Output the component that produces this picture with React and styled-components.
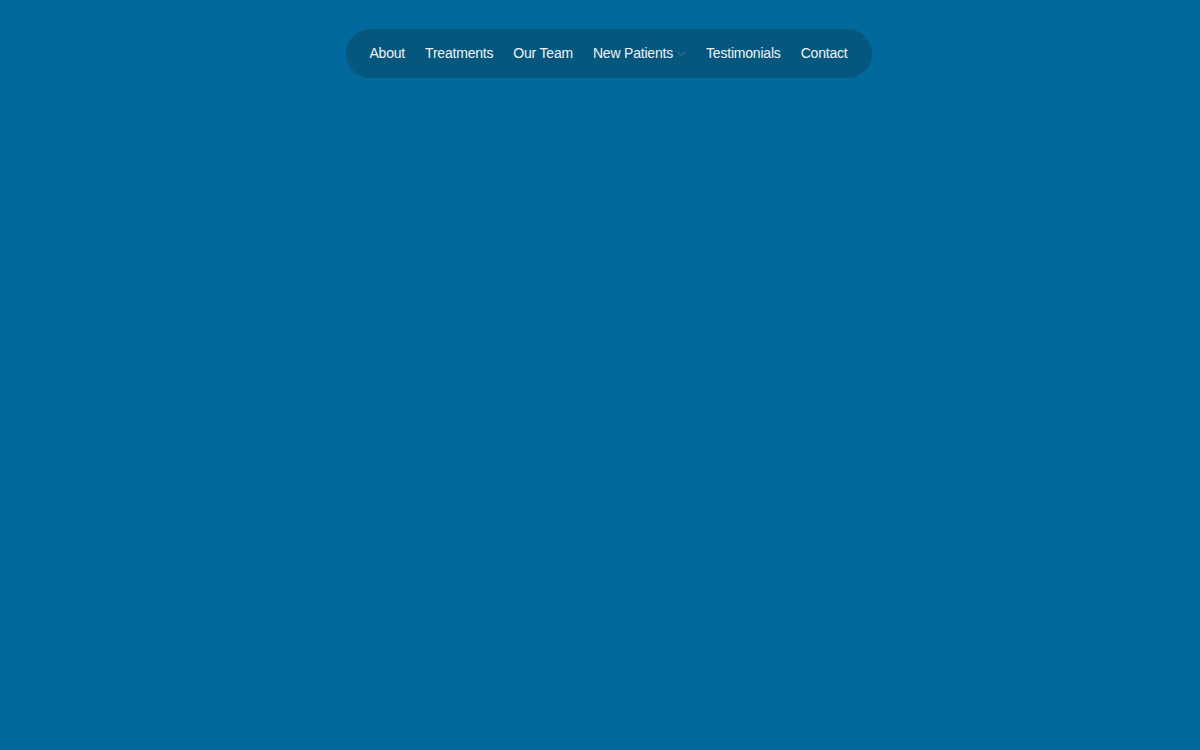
import React from "react";
import styled, { createGlobalStyle } from "styled-components";

const GlobalStyle = createGlobalStyle`
  html, body {
    margin: 0;
    padding: 0;
    background: #02699c;
  }
  body {
    font-family: "Liberation Sans", Arial, sans-serif;
  }
`;

const Page = styled.div`
  min-height: 750px;
  background: #02699c;
  display: flex;
  justify-content: center;
  align-items: flex-start;
  padding: 29px 0 0 18px;
  box-sizing: border-box;
`;

const Nav = styled.nav`
  display: flex;
  align-items: center;
  gap: 20px;
  height: 49px;
  padding: 0 24px 2px 23px;
  box-sizing: border-box;
  background: #05577e;
  border-radius: 25px;
`;

const NavLink = styled.a`
  display: flex;
  align-items: center;
  gap: 4px;
  color: #eef3f6;
  font-size: 14px;
  letter-spacing: -0.2px;
  text-decoration: none;
  cursor: pointer;
  white-space: nowrap;
`;

const Chevron = () => (
  <svg width="9" height="6" viewBox="0 0 9 6" fill="none" style={{ marginTop: 2 }}>
    <path d="M1 1.2L4.5 4.6L8 1.2" stroke="#2d6f92" strokeWidth="1.3" strokeLinecap="round" strokeLinejoin="round" />
  </svg>
);

const links = [
  { label: "About" },
  { label: "Treatments" },
  { label: "Our Team" },
  { label: "New Patients", dropdown: true },
  { label: "Testimonials" },
  { label: "Contact" },
];

export default function App() {
  return (
    <>
      <GlobalStyle />
      <Page>
        <Nav>
          {links.map((l) => (
            <NavLink key={l.label}>
              {l.label}
              {l.dropdown && <Chevron />}
            </NavLink>
          ))}
        </Nav>
      </Page>
    </>
  );
}
